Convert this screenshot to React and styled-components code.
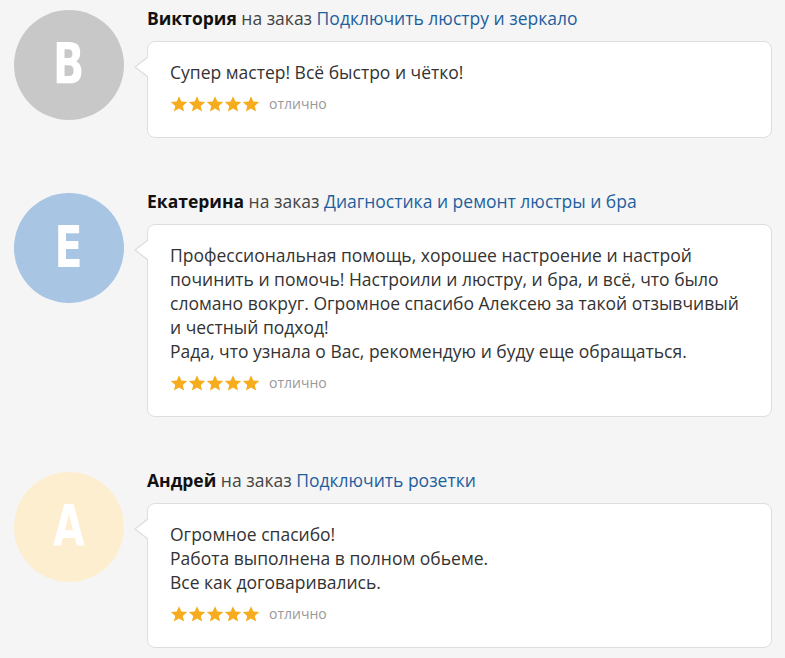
import React from 'react';
import styled, { createGlobalStyle } from 'styled-components';

const GlobalStyle = createGlobalStyle`
  html, body {
    margin: 0;
    padding: 0;
    background: #f5f5f5;
  }
  body {
    font-family: 'Open Sans', 'Noto Sans', sans-serif;
    color: #333;
  }
`;

const List = styled.div`
  display: flex;
  flex-direction: column;
  gap: 51px;
  padding: 6px 13px 20px 14px;
`;

const Review = styled.div`
  display: flex;
  gap: 23px;
  align-items: flex-start;
`;

const Avatar = styled.div`
  flex: 0 0 110px;
  width: 110px;
  height: 110px;
  margin-top: 4px;
  border-radius: 50%;
  background: ${({ $color }) => $color};
  display: flex;
  align-items: center;
  justify-content: center;
`;

const Letter = styled.span`
  display: inline-block;
  color: #fff;
  font-family: 'DejaVu Sans Condensed', 'DejaVu Sans', sans-serif;
  font-stretch: condensed;
  font-weight: 700;
  font-size: 57px;
  line-height: 1;
  transform: scaleX(0.8);
  margin-bottom: 2px;
`;

const Body = styled.div`
  flex: 1;
  min-width: 0;
`;

const Header = styled.div`
  font-size: 17.5px;
  line-height: 24px;
  color: #444;
  margin-bottom: 11px;
`;

const Name = styled.b`
  color: #111;
  font-weight: 700;
`;

const Link = styled.a`
  color: #1f5f9e;
  text-decoration: none;
`;

const Bubble = styled.div`
  position: relative;
  background: #fff;
  border: 1px solid #dedede;
  border-radius: 8px;
  padding: 18px 22px 24px 22px;

  &::before,
  &::after {
    content: '';
    position: absolute;
    top: 14px;
    border-style: solid;
    border-color: transparent;
  }
  &::before {
    left: -14px;
    border-width: 11px 14px 11px 0;
    border-right-color: #dedede;
  }
  &::after {
    left: -12px;
    top: 15px;
    border-width: 10px 13px 10px 0;
    border-right-color: #fff;
  }
`;

const Text = styled.p`
  margin: 0;
  font-size: 17.5px;
  line-height: 24px;
  color: #333;
`;

const Rating = styled.div`
  display: flex;
  align-items: center;
  gap: 9px;
  margin-top: 11px;
`;

const Stars = styled.div`
  display: flex;
`;

const Label = styled.span`
  font-size: 14px;
  color: #999;
  line-height: 18px;
`;

const Star = () => (
  <svg width="18" height="18" viewBox="0 0 24 24">
    <path
      fill="#f6ac1c"
      d="M12 1.5l3.1 7.2 7.8.7-5.9 5.1 1.8 7.6L12 18.1l-6.8 4 1.8-7.6L1.1 9.4l7.8-.7z"
    />
  </svg>
);

const reviews = [
  {
    letter: 'В',
    color: '#c8c8c8',
    name: 'Виктория',
    order: 'Подключить люстру и зеркало',
    lines: ['Супер мастер! Всё быстро и чётко!'],
  },
  {
    letter: 'Е',
    color: '#a8c5e3',
    name: 'Екатерина',
    order: 'Диагностика и ремонт люстры и бра',
    lines: [
      'Профессиональная помощь, хорошее настроение и настрой починить и помочь! Настроили и люстру, и бра, и всё, что было сломано вокруг. Огромное спасибо Алексею за такой отзывчивый и честный подход!',
      'Рада, что узнала о Вас, рекомендую и буду еще обращаться.',
    ],
  },
  {
    letter: 'А',
    color: '#fdeecf',
    name: 'Андрей',
    order: 'Подключить розетки',
    lines: ['Огромное спасибо!', 'Работа выполнена в полном обьеме.', 'Все как договаривались.'],
  },
];

const App = () => (
  <>
    <GlobalStyle />
    <List>
      {reviews.map((r) => (
        <Review key={r.name}>
          <Avatar $color={r.color}>
            <Letter>{r.letter}</Letter>
          </Avatar>
          <Body>
            <Header>
              <Name>{r.name}</Name> на заказ <Link href="#">{r.order}</Link>
            </Header>
            <Bubble>
              {r.lines.map((l, i) => (
                <Text key={i}>{l}</Text>
              ))}
              <Rating>
                <Stars>
                  {[0, 1, 2, 3, 4].map((i) => (
                    <Star key={i} />
                  ))}
                </Stars>
                <Label>отлично</Label>
              </Rating>
            </Bubble>
          </Body>
        </Review>
      ))}
    </List>
  </>
);

export default App;
